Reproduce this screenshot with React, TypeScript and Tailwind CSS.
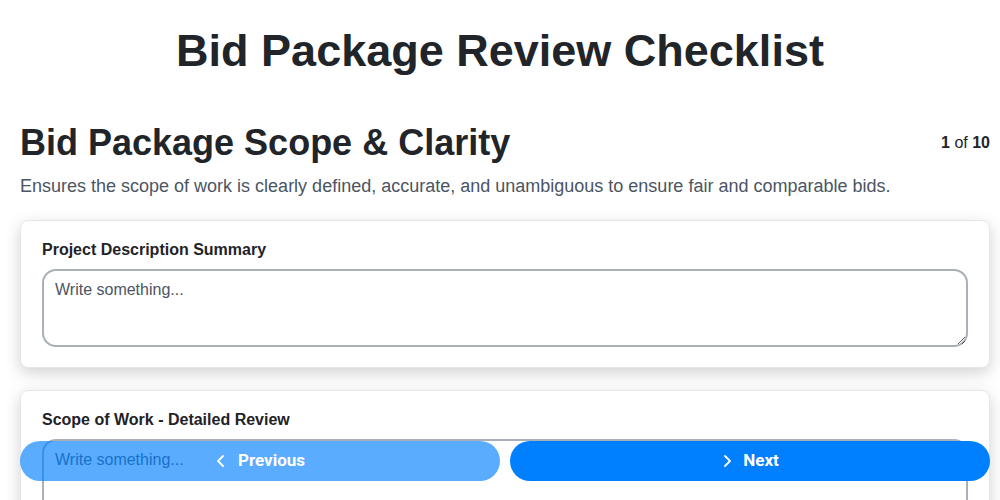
import React from 'react';

const font = { fontFamily: '"Liberation Sans", Arial, sans-serif' };

function Field({ label }: { label: string }) {
  return (
    <div className="bg-white border border-[#e5e7eb] rounded-lg shadow-[0_5px_16px_rgba(0,0,0,0.18)] px-[21px] pt-[19px] pb-[20px]">
      <label className="block text-[16px] font-bold text-[#1f2328] mb-[9px] leading-5">{label}</label>
      <textarea
        placeholder="Write something..."
        className="block w-full h-[78px] border-2 border-[#a9b0b9] rounded-[14px] px-[11px] py-[9px] text-[16px] leading-5 text-[#374151] placeholder:text-[#4b5563] outline-none"
      />
    </div>
  );
}

export default function App() {
  return (
    <div className="min-h-screen bg-white text-[#212529]" style={font}>
      <div className="pl-5 pr-[10px] pb-24">
        <h1 className="text-[45px] font-bold text-center leading-none pt-[28px] pb-[48px] pr-[10px]">
          Bid Package Review Checklist
        </h1>
        <div className="flex items-start justify-between">
          <h2 className="text-[36px] font-bold leading-[44px]">Bid Package Scope &amp; Clarity</h2>
          <div className="text-[16px] pt-[10px] text-[#212529]">
            <span className="font-bold">1</span> of <span className="font-bold">10</span>
          </div>
        </div>
        <p className="text-[18px] text-[#4b5563] mt-[8px] mb-[20px]">
          Ensures the scope of work is clearly defined, accurate, and unambiguous to ensure fair and comparable bids.
        </p>
        <div className="flex flex-col gap-[22px]">
          <Field label="Project Description Summary" />
          <Field label="Scope of Work - Detailed Review" />
          <Field label="Specifications & Drawings" />
        </div>
      </div>
      <div className="fixed left-5 right-[10px] bottom-[19px] flex gap-[10px]" style={{ fontFamily: 'Roboto, "Liberation Sans", sans-serif' }}>
        <button className="flex-1 h-[40px] rounded-full bg-[#0080ff] opacity-[0.65] text-white font-bold text-[17px] flex items-center justify-center gap-[11px]">
          <svg width="12" height="16" viewBox="0 0 12 16" fill="none" stroke="currentColor" strokeWidth="1.8" strokeLinecap="round" strokeLinejoin="round">
            <path d="M8 3 L3 8 L8 13" />
          </svg>
          Previous
        </button>
        <button className="flex-1 h-[40px] rounded-full bg-[#0080ff] text-white font-bold text-[17px] flex items-center justify-center gap-[10px]">
          <svg width="12" height="16" viewBox="0 0 12 16" fill="none" stroke="currentColor" strokeWidth="1.8" strokeLinecap="round" strokeLinejoin="round">
            <path d="M4 3 L9 8 L4 13" />
          </svg>
          Next
        </button>
      </div>
    </div>
  );
}
